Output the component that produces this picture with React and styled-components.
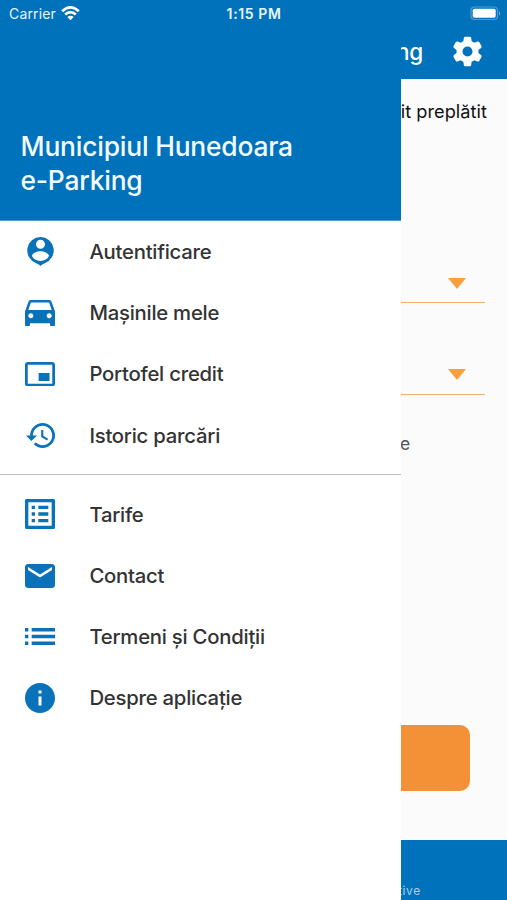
import React from "react";
import styled, { createGlobalStyle } from "styled-components";

const blue = "#0072bc";
const iconBlue = "#0a72b9";

const GlobalStyle = createGlobalStyle`
  * { box-sizing: border-box; }
  body { margin: 0; font-family: Inter, "Liberation Sans", sans-serif; }
`;

const Screen = styled.div`
  position: relative;
  width: 507px;
  height: 900px;
  overflow: hidden;
  background: #fbfbfb;
`;

const Page = styled.main`
  display: flex;
  flex-direction: column;
  height: 100%;
`;

const AppBar = styled.header`
  display: flex;
  align-items: center;
  justify-content: flex-end;
  gap: 29px;
  height: 79px;
  padding: 24px 24px 0 0;
  background: ${blue};
  color: #fff;
`;

const AppTitle = styled.span`
  font-size: 22.5px;
  font-weight: 500;
  line-height: 30px;
  letter-spacing: -0.3px;
`;

const Content = styled.section`
  display: flex;
  flex-direction: column;
  flex: 1;
  align-items: flex-end;
  padding: 19px 22px 0 0;
`;

const CreditLabel = styled.div`
  margin-right: -2px;
  font-size: 18.2px;
  line-height: 26px;
  letter-spacing: 0.04px;
  color: #111;
`;

const Select = styled.div`
  display: flex;
  justify-content: flex-end;
  align-items: flex-start;
  width: 440px;
  height: ${(p) => p.$height}px;
  margin-top: ${(p) => p.$top}px;
  padding-right: 19px;
  border-bottom: 1.5px solid #f8b069;
`;

const Caret = styled.i`
  border: 9px solid transparent;
  border-top: 11px solid #f99f40;
  border-bottom: 0;
`;

const Hint = styled.div`
  width: 85px;
  margin-top: 36px;
  font-size: 17.5px;
  line-height: 26px;
  color: #555;
`;

const PrimaryButton = styled.button`
  width: 433px;
  height: 66px;
  margin: 268px 15px 0 0;
  border: 0;
  border-radius: 10px;
  background: #f49136;
`;

const Footer = styled.footer`
  display: flex;
  align-items: flex-end;
  height: 60px;
  padding: 0 0 1px 398px;
  background: ${blue};
  color: #a9cfea;
  font-size: 12px;
  line-height: 16px;
  letter-spacing: 0.6px;
`;

const Drawer = styled.aside`
  position: absolute;
  inset: 0 auto 0 0;
  width: 400.5px;
  background: #fff;
`;

const DrawerHeader = styled.div`
  display: flex;
  align-items: flex-end;
  height: 221px;
  padding: 0 20.5px 23px;
  background: ${blue};
  border-bottom: 1px solid #4d9dd1;
`;

const DrawerTitle = styled.h1`
  margin: 0;
  color: #f4fbff;
  font-size: 26.4px;
  font-weight: 500;
  line-height: 33.5px;
  letter-spacing: -0.2px;
  white-space: pre-line;
`;

const Group = styled.nav`
  display: flex;
  flex-direction: column;
  padding-bottom: 8px;
  & + & {
    padding-top: 9px;
    border-top: 1.5px solid #bcbcbc;
  }
`;

const Item = styled.a`
  display: grid;
  grid-template-columns: 80px 1fr;
  align-items: center;
  height: 61.2px;
  padding-right: 20px;
`;

const IconSlot = styled.span`
  display: flex;
  justify-content: center;
  svg { display: block; fill: ${iconBlue}; }
`;

const Label = styled.span`
  padding: 1px 0 0 9.4px;
  color: #333;
  font-size: 20.3px;
  font-weight: 500;
  line-height: 28px;
  letter-spacing: -0.23px;
  white-space: nowrap;
`;

const StatusBar = styled.div`
  position: absolute;
  inset: 0 0 auto 0;
  display: grid;
  grid-template-columns: 1fr auto 1fr;
  align-items: center;
  height: 27px;
  padding: 0 6px 0 9px;
  color: #e8f6ff;
  font-size: 14px;
`;

const Carrier = styled.div`
  display: flex;
  align-items: center;
  gap: 5.5px;
  letter-spacing: 0.15px;
`;

const Clock = styled.div`
  margin-left: -2px;
  font-size: 14px;
  font-weight: 600;
  letter-spacing: 0.6px;
`;

const BatteryWrap = styled.div`
  display: flex;
  justify-content: flex-end;
`;

const Gear = () => (
  <svg width="31" height="31" viewBox="-15.5 -15.5 31 31" fill="#fff" aria-hidden="true">
    <circle r="8" fill="none" stroke="#fff" strokeWidth="6" />
    {[0, 60, 120, 180, 240, 300].map((angle) => (
      <path
        key={angle}
        transform={`rotate(${angle})`}
        d="M-4.2-9L-3.7-13.5Q-3.5-14.8-2.3-14.8H2.3Q3.5-14.8 3.7-13.5L4.2-9L3-7H-3Z"
      />
    ))}
  </svg>
);

const Glyph = ({ box, w, h, d }) => (
  <svg viewBox={box} width={w} height={h} fillRule="evenodd" preserveAspectRatio="none">
    <path d={d} />
  </svg>
);

const account = [
  { label: "Autentificare", box: "0 0 27 29", w: 27, h: 29,
    d: "M13.5 0A13.5 13.5 0 0 1 17.8 26.2Q15.6 26.8 13.5 29Q11.4 26.8 9.2 26.2A13.5 13.5 0 0 1 13.5 0ZM13.5 2.7A4.5 4.5 0 1 0 13.5 11.7A4.5 4.5 0 1 0 13.5 2.7ZM5 19C6.3 21.9 9.6 23.9 13.5 23.9S20.7 21.9 22 19C21.8 15.9 16.8 14.2 13.5 14.2S5.2 15.9 5 19Z" },
  { label: "Mașinile mele", box: "3 5 18 16", w: 30, h: 26.5,
    d: "M18.92 6.01C18.72 5.42 18.16 5 17.5 5h-11c-.66 0-1.21.42-1.42 1.01L3 12v8c0 .55.45 1 1 1h1c.55 0 1-.45 1-1v-1h12v1c0 .55.45 1 1 1h1c.55 0 1-.45 1-1v-8l-2.08-5.99zM6.5 16c-.83 0-1.5-.67-1.5-1.5S5.67 13 6.5 13s1.5.67 1.5 1.5S7.33 16 6.5 16zm11 0c-.83 0-1.5-.67-1.5-1.5s.67-1.5 1.5-1.5 1.5.67 1.5 1.5-.67 1.5-1.5 1.5zM5 11l1.5-4.5h11L19 11H5z" },
  { label: "Portofel credit", box: "1 3 22 18", w: 30, h: 24.5,
    d: "M19 11h-8v6h8v-6zm4 8V4.98C23 3.88 22.1 3 21 3H3c-1.1 0-2 .88-2 1.98V19c0 1.1.9 2 2 2h18c1.1 0 2-.9 2-2zm-2 .02H3V4.97h18v14.05z" },
  { label: "Istoric parcări", box: "1 3 21 18", w: 29, h: 25,
    d: "M13 3c-4.97 0-9 4.03-9 9H1l3.89 3.89.07.14L9 12H6c0-3.87 3.13-7 7-7s7 3.13 7 7-3.13 7-7 7c-1.93 0-3.68-.79-4.94-2.06l-1.42 1.42C8.27 19.99 10.51 21 13 21c4.97 0 9-4.03 9-9s-4.03-9-9-9zm-1 5v5l4.28 2.54.72-1.21-3.5-2.08V8H12z" },
];

const about = [
  { label: "Tarife", box: "3 3 18 18", w: 30, h: 30,
    d: "M3.9 3h16.2c.5 0 .9.4.9.9v16.2c0 .5-.4.9-.9.9H3.9c-.5 0-.9-.4-.9-.9V3.9c0-.5.4-.9.9-.9zM5 5v14h14V5H5zm6 2h6v2h-6V7zm0 4h6v2h-6v-2zm0 4h6v2h-6v-2zM7 7h2v2H7V7zm0 4h2v2H7v-2zm0 4h2v2H7v-2z" },
  { label: "Contact", box: "2 4 20 16", w: 30, h: 24,
    d: "M20 4H4c-1.1 0-1.99.9-1.99 2L2 18c0 1.1.9 2 2 2h16c1.1 0 2-.9 2-2V6c0-1.1-.9-2-2-2zm0 4l-8 5-8-5V6l8 5 8-5v2z" },
  { label: "Termeni și Condiții", box: "3 7 18 10", w: 30, h: 17,
    d: "M3 13h2v-2H3v2zm0 4h2v-2H3v2zm0-8h2V7H3v2zm4 4h14v-2H7v2zm0 4h14v-2H7v2zM7 7v2h14V7H7z" },
  { label: "Despre aplicație", box: "2 2 20 20", w: 30, h: 30,
    d: "M12 2C6.48 2 2 6.48 2 12s4.48 10 10 10 10-4.48 10-10S17.52 2 12 2zm1 15h-2v-6h2v6zm0-8h-2V7h2v2z" },
];

const Menu = ({ items }) => (
  <Group>
    {items.map(({ label, ...icon }) => (
      <Item key={label}>
        <IconSlot><Glyph {...icon} /></IconSlot>
        <Label>{label}</Label>
      </Item>
    ))}
  </Group>
);

export default function App() {
  return (
    <Screen>
      <GlobalStyle />
      <Page>
        <AppBar>
          <AppTitle>e-Parking</AppTitle>
          <Gear />
        </AppBar>
        <Content>
          <CreditLabel>Credit preplătit</CreditLabel>
          <Select $top={154} $height={25}><Caret /></Select>
          <Select $top={66} $height={26}><Caret /></Select>
          <Hint>e</Hint>
          <PrimaryButton aria-label="Parcare" />
        </Content>
        <Footer>tive</Footer>
      </Page>
      <Drawer>
        <DrawerHeader>
          <DrawerTitle>{"Municipiul Hunedoara\ne-Parking"}</DrawerTitle>
        </DrawerHeader>
        <Menu items={account} />
        <Menu items={about} />
      </Drawer>
      <StatusBar>
        <Carrier>
          Carrier
          <svg width="19" height="15" viewBox="0 0 19 15" fill="none" stroke="#fff" strokeWidth="2.7">
            <path d="M1.2 5.3Q9.5-2.4 17.8 5.3M4.2 8.6Q9.5 3.8 14.8 8.6" />
            <path d="M6.4 11.1Q9.5 8.4 12.6 11.1L9.5 14.2Z" fill="#fff" stroke="none" />
          </svg>
        </Carrier>
        <Clock>1:15 PM</Clock>
        <BatteryWrap>
          <svg width="31" height="15" viewBox="0 0 31 15">
            <rect x="1" y="1" width="26.5" height="12.5" rx="3.5" fill="none" stroke="#4d9dd3" strokeWidth="1.2" />
            <rect x="2.7" y="2.7" width="23" height="9" rx="1.7" fill="#fff" />
            <path d="M29 5Q31.2 7.2 29 9.5Z" fill="#71b1dc" />
          </svg>
        </BatteryWrap>
      </StatusBar>
    </Screen>
  );
}
